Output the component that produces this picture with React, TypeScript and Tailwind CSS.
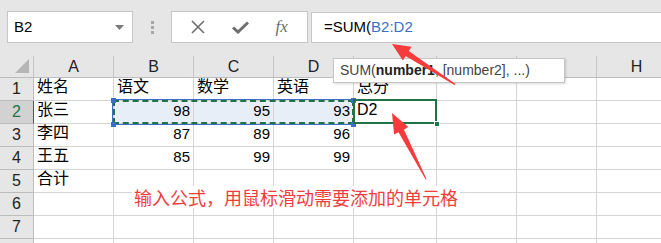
import React from 'react';

const cols = [
  { key: 'A', w: 'w-[80px]' },
  { key: 'B', w: 'w-[80px]' },
  { key: 'C', w: 'w-[80px]' },
  { key: 'D', w: 'w-[80px]' },
  { key: 'E', w: 'w-[83px]' },
  { key: 'F', w: 'w-[80px]' },
  { key: 'G', w: 'w-[80px]' },
  { key: 'H', w: 'w-[80px]' },
];

const rows: (string | number)[][] = [
  ['姓名', '语文', '数学', '英语', '总分'],
  ['张三', 98, 95, 93, 'D2'],
  ['李四', 87, 89, 96],
  ['王五', 85, 99, 99],
  ['合计'],
  [],
  [],
  [],
];

const font = { fontFamily: '"Liberation Sans", "Noto Sans CJK SC", sans-serif' };

function Cell({ v, w, sel }: { v?: string | number; w: string; sel: boolean }) {
  const isNum = typeof v === 'number';
  return (
    <div
      className={`${w} h-full shrink-0 border-r border-b border-[#d4d4d4] flex items-end pb-[1px] overflow-visible whitespace-nowrap ${
        isNum ? 'justify-end pr-[3px] text-[15px]' : 'pl-[3px] text-[16px]'
      } ${sel ? 'bg-[#e8eef8]' : 'bg-white'}`}
    >
      {v !== undefined ? v : ''}
    </div>
  );
}

export default function App() {
  return (
    <div className="relative w-[661px] h-[243px] overflow-hidden bg-white text-black" style={font}>
      {/* formula toolbar */}
      <div className="h-[56px] bg-[#e6e6e6] flex items-start pt-[11px] pl-[7px]">
        <div className="w-[126px] h-[32px] bg-white border border-[#c6c6c6] flex items-center justify-between pl-[6px] pr-[8px] text-[15px]">
          <span>B2</span>
          <svg width="9" height="5" viewBox="0 0 9 5">
            <path d="M0 0 L9 0 L4.5 5 Z" fill="#7a7a7a" />
          </svg>
        </div>
        <div className="w-[38px] h-[32px] flex flex-col items-center justify-center gap-[2px]">
          <div className="w-[3px] h-[3px] bg-[#a6a6a6]" />
          <div className="w-[3px] h-[3px] bg-[#a6a6a6]" />
          <div className="w-[3px] h-[3px] bg-[#a6a6a6]" />
        </div>
        <div className="w-[137px] h-[32px] bg-white border border-[#c6c6c6] flex items-center justify-around px-[6px]">
          <svg width="14" height="14" viewBox="0 0 14 14">
            <path d="M1 1 L13 13 M13 1 L1 13" stroke="#6e6e6e" strokeWidth="1.6" />
          </svg>
          <svg width="17" height="13" viewBox="0 0 17 13">
            <path d="M1 6.5 L6 11 L16 1.5" stroke="#6e6e6e" strokeWidth="3" fill="none" />
          </svg>
          <span className="text-[#6e6e6e] text-[17px] italic" style={{ fontFamily: '"Liberation Serif", serif' }}>
            fx
          </span>
        </div>
        <div className="ml-[3px] flex-1 h-[31px] mt-[1px] bg-white border border-[#c6c6c6] border-r-0 flex items-center pl-[12px] text-[15px]">
          <span>=SUM(</span>
          <span className="text-[#3b6fc6]">B2:D2</span>
        </div>
      </div>

      {/* column header row */}
      <div className="flex h-[22px] bg-[#e6e6e6] border-b border-[#bdbdbd]">
        <div className="w-[34px] h-full shrink-0 border-r border-[#c6c6c6] flex items-end justify-end pr-[4px] pb-[4px]">
          <svg width="14" height="14" viewBox="0 0 14 14">
            <path d="M14 0 L14 14 L0 14 Z" fill="#b5b5b5" />
          </svg>
        </div>
        {cols.map((c) => (
          <div
            key={c.key}
            className={`${c.w} h-full shrink-0 border-r border-[#c6c6c6] flex items-center justify-center text-[16px] text-[#222]`}
          >
            {c.key}
          </div>
        ))}
      </div>

      {/* rows */}
      {rows.map((r, i) => (
        <div key={i} className="flex h-[23px]">
          <div
            className={`w-[34px] h-full shrink-0 border-b border-r flex items-center justify-center text-[16px] ${
              i === 1
                ? 'bg-[#d2d2d2] text-[#217346] border-r-[#217346] border-b-[#bdbdbd]'
                : 'bg-[#e6e6e6] text-[#222] border-[#bdbdbd]'
            }`}
          >
            {i < 7 ? i + 1 : ''}
          </div>
          {cols.map((c, j) => (
            <Cell key={c.key} v={r[j]} w={c.w} sel={i === 1 && j >= 1 && j <= 3} />
          ))}
        </div>
      ))}

      {/* copy range B2:D2 */}
      <div className="absolute left-[112px] top-[99px] w-[243px] h-[26px] border border-[#3b6fc6]" />
      <div className="absolute left-[113px] top-[100px] w-[241px] h-[24px] border-2 border-dashed border-[#217346]" />
      <div className="absolute left-[111px] top-[98px] w-[5px] h-[5px] bg-[#3b6fc6]" />
      <div className="absolute left-[111px] top-[122px] w-[5px] h-[5px] bg-[#3b6fc6]" />
      <div className="absolute left-[351px] top-[98px] w-[5px] h-[5px] bg-[#3b6fc6]" />
      <div className="absolute left-[351px] top-[122px] w-[5px] h-[5px] bg-[#3b6fc6]" />

      {/* active cell E2 */}
      <div className="absolute left-[353px] top-[99px] w-[84px] h-[25px] border-2 border-[#217346]" />
      <div className="absolute left-[434px] top-[121px] w-[6px] h-[6px] bg-[#217346] border border-white" />

      {/* function tooltip */}
      <div className="absolute left-[333px] top-[58px] w-[232px] h-[25px] bg-white border border-[#c6c6c6] shadow-[1px_1px_2px_rgba(0,0,0,0.15)] flex items-center pl-[6px] text-[14px] text-[#444] whitespace-nowrap">
        SUM(<b className="text-[#222]">number1</b>, [number2], ...)
      </div>

      {/* annotation */}
      <div className="absolute left-[132px] top-[186px] px-[2px] bg-white text-[18px] leading-[22px] text-[#ef3d3d] whitespace-nowrap" style={{ fontFamily: '"Noto Sans CJK SC", sans-serif' }}>
        输入公式，用鼠标滑动需要添加的单元格
      </div>

      <svg className="absolute left-0 top-0 pointer-events-none" width="661" height="243" viewBox="0 0 661 243">
        <polygon
          points="392,44 411.5,46.8 408.8,51.1 455.5,84 454.5,85 405.6,56.1 402.9,60.4"
          fill="#f53b3b"
        />
        <polygon
          points="392,113 408.3,127.1 403.9,129.4 426.5,179 425.5,179.3 398.5,132.2 394.1,134.5"
          fill="#f53b3b"
        />
      </svg>
    </div>
  );
}
